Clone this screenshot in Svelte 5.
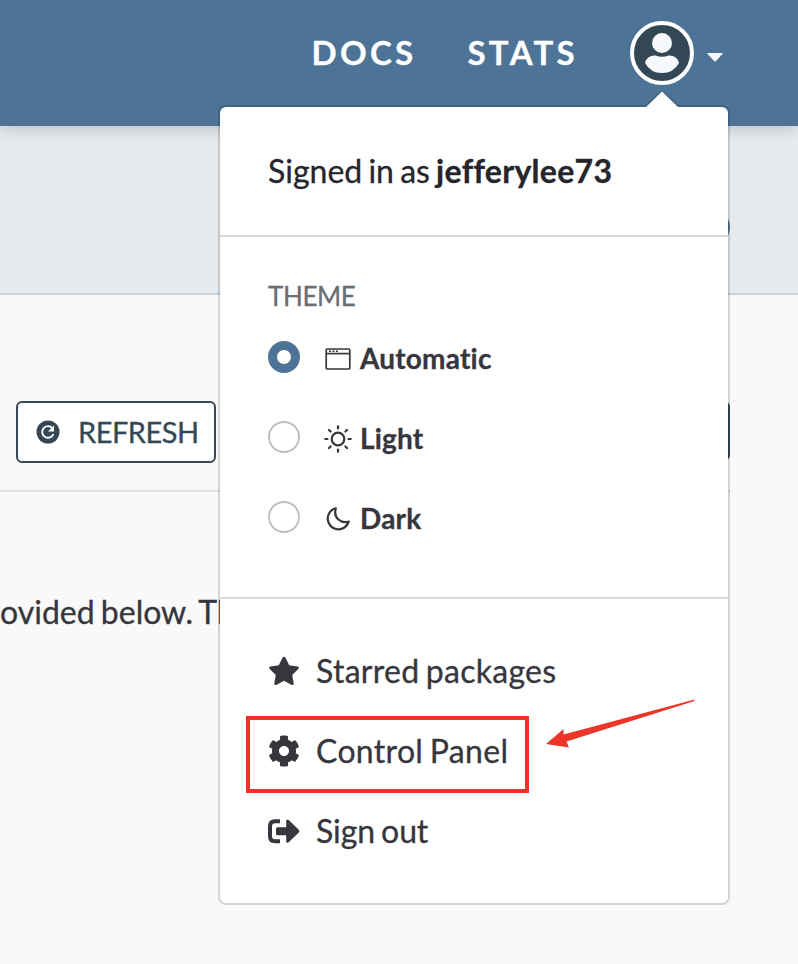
<script>
  const themes = [
    { id: 'auto', label: 'Automatic' },
    { id: 'light', label: 'Light' },
    { id: 'dark', label: 'Dark' },
  ];
  const links = [
    { id: 'star', label: 'Starred packages' },
    { id: 'gear', label: 'Control Panel' },
    { id: 'exit', label: 'Sign out' },
  ];
  const rays = [0, 45, 90, 135, 180, 225, 270, 315];
  let theme = $state('auto');
</script>

<div class="page">
  <header>
    <nav>
      <a href="#docs" class="docs">DOCS</a>
      <a href="#stats" class="stats">STATS</a>
    </nav>
    <button class="account" aria-label="Account">
      <svg class="avatar" width="64" height="64" viewBox="0 0 64 64">
        <circle cx="32" cy="32" r="30" fill="#334854" stroke="#fff" stroke-width="4" />
        <circle cx="32" cy="22" r="10" fill="#f8f9fc" />
        <path d="M25.500 34.500Q32 37 38.500 34.500Q47 34 49 42Q43.500 52 32 52T15 42Q17 34 25.500 34.500Z" fill="#f8f9fc" />
      </svg>
      <svg width="16" height="9" viewBox="0 0 16 9"><path d="M1 0H15Q16 0 15.500 1L8.700 8.300Q8 9 7.300 8.300L.5 1Q0 0 1 0Z" fill="#f8f9fc" /></svg>
    </button>
  </header>

  <section class="hero"><i class="pill"></i></section>

  <main>
    <div class="toolbar">
      <button class="refresh">
        <svg width="24" height="24" viewBox="0 0 24 24">
          <circle cx="12" cy="12" r="11.500" fill="#334854" />
          <path d="M16.300 8.100A5.800 5.800 0 1 0 17.400 14" fill="none" stroke="#fff" stroke-width="1.900" />
          <path d="M18 5.500V11.500H12Z" fill="#fff" />
        </svg>
        <span>REFRESH</span>
      </button>
      <i class="other"></i>
    </div>
    <p>ovided below. Th</p>
  </main>

  <aside class="menu">
    <svg class="tip" width="36" height="17" viewBox="0 0 36 17">
      <path d="M0 16L18 0L36 16" fill="#426380" />
      <path d="M2 17L18 1.500L34 17Z" fill="#fff" />
    </svg>
    <div class="signed">Signed in as <b>jefferylee73</b></div>
    <div class="themes">
      <h2>THEME</h2>
      {#each themes as t}
        <label>
          <input type="radio" name="theme" value={t.id} bind:group={theme} />
          <svg width="28" height="28" viewBox="0 0 28 28" fill="none" stroke="#36363c" stroke-width="2.200">
            {#if t.id === 'auto'}
              <rect x="2.200" y="4" width="23.600" height="20" rx="1" stroke-width="1.700" />
              <path d="M2 8.600H26" stroke-width="1.700" />
              <path d="M5 6.300H7M8.500 6.300H10.500M12 6.300H14" stroke-width="1.500" />
            {:else if t.id === 'light'}
              <circle cx="14" cy="14" r="6.300" />
              {#each rays as r}
                <path d="M14 1.300V3.500" stroke-linecap="round" transform="rotate({r} 14 14)" />
              {/each}
            {:else}
              <path d="M11.800 3.300A10.700 10.700 0 1 0 24.700 16.600C17.500 19 8.800 13 11.800 3.300Z" stroke-linejoin="round" />
            {/if}
          </svg>
          <span>{t.label}</span>
        </label>
      {/each}
    </div>
    <div class="links">
      {#each links as l}
        <a href="#{l.id}" class={l.id}>
          {#if l.id === 'star'}
            <svg width="32" height="32" viewBox="0 0 32 32"><path d="M14.500 2.800Q16 .5 17.500 2.800L21.200 10.300L29.500 11.500Q31.800 12.100 30.300 14L24.200 20L25.700 28.500Q25.800 30.600 23.800 29.900L16 25.800L8.200 29.900Q6.200 30.600 6.300 28.500L7.800 20L1.700 14Q.2 12.100 2.500 11.500L10.800 10.300Z" /></svg>
          {:else if l.id === 'gear'}
            <svg width="32" height="32" viewBox="0 0 512 512"><path d="M487.400 315.700l-42.600-24.600c4.300-23.200 4.300-47 0-70.200l42.600-24.600c4.900-2.800 7.100-8.600 5.500-14-11.100-35.600-30-67.800-54.700-94.600-3.800-4.100-10-5.100-14.800-2.300L380.800 110c-17.900-15.400-38.500-27.300-60.800-35.100V25.800c0-5.600-3.900-10.500-9.400-11.700-36.700-8.200-74.300-7.800-109.200 0-5.500 1.200-9.400 6.100-9.400 11.700V75c-22.200 7.900-42.800 19.800-60.800 35.100L88.700 85.500c-4.900-2.800-11-1.900-14.800 2.300-24.700 26.700-43.600 58.900-54.700 94.600-1.700 5.400.6 11.200 5.500 14L67.300 221c-4.300 23.200-4.300 47 0 70.200l-42.600 24.600c-4.900 2.800-7.100 8.600-5.500 14 11.100 35.600 30 67.800 54.700 94.600 3.800 4.100 10 5.100 14.800 2.300l42.600-24.600c17.900 15.400 38.500 27.300 60.800 35.100v49.200c0 5.600 3.900 10.500 9.400 11.700 36.700 8.200 74.300 7.800 109.200 0 5.500-1.200 9.400-6.100 9.400-11.700v-49.200c22.200-7.900 42.800-19.800 60.800-35.100l42.600 24.600c4.900 2.800 11 1.900 14.800-2.300 24.700-26.700 43.600-58.900 54.700-94.600 1.500-5.500-.7-11.300-5.600-14.100zM256 336c-44.100 0-80-35.900-80-80s35.900-80 80-80 80 35.900 80 80-35.900 80-80 80z" /></svg>
          {:else}
            <svg width="32" height="32" viewBox="0 0 32 32">
              <path d="M12 6.300H7Q2 6.300 2 11.300V21.300Q2 26.300 7 26.300H12" fill="none" stroke="#36363c" stroke-width="4" />
              <path d="M9.500 12.300H18.200V6Q18.500 3.500 20.700 5L30.800 14.800Q32 16.200 30.800 17.600L20.700 27.300Q18.500 28.700 18.200 26.200V20.300H9.500Q8 20.300 8 18.800V13.800Q8 12.300 9.500 12.300Z" />
            </svg>
          {/if}
          <span>{l.label}</span>
        </a>
      {/each}
    </div>
  </aside>

  <div class="mark"></div>
  <svg class="arrow" width="152" height="52" viewBox="0 0 152 52"><path d="M1 46L18.500 31V36.500L149.500 1.500V3L21.500 43.500L24 49.500Z" fill="#eb3528" /></svg>
</div>

<style>
  .page {
    position: relative;
    box-sizing: border-box;
    width: 798px;
    height: 964px;
    overflow: hidden;
    background: #f9f9f9;
    font-family: Lato, sans-serif;
    color: #36363c;
    -webkit-text-stroke: .3px currentColor;
  }
  a { color: inherit; text-decoration: none; }
  button { font: inherit; padding: 0; border: 0; background: none; }
  svg { display: block; flex: none; }
  header {
    position: relative;
    display: flex;
    justify-content: flex-end;
    box-sizing: border-box;
    height: 126px;
    padding-right: 75px;
    background: #4d7496;
    box-shadow: 0 2px 16px rgba(0, 0, 0, .2);
  }
  nav {
    display: flex;
    gap: 51px;
    padding-top: 32px;
    margin-right: 52px;
    color: #fff;
    font-size: 33px;
    line-height: 40px;
    font-weight: 700;
    letter-spacing: 3.300px;
  }
  .account {
    display: flex;
    align-items: center;
    gap: 13px;
    height: 64px;
    margin-top: 21px;
  }
  .account svg:last-child { margin-top: 8px; }
  .hero {
    display: flex;
    justify-content: flex-end;
    box-sizing: border-box;
    height: 169px;
    padding: 82px 68px 0 0;
    background: #e7ebee;
    border-bottom: 2px solid #c5d3df;
  }
  .pill { width: 38px; height: 38px; border-radius: 50%; background: #4d7496; }
  .toolbar {
    display: flex;
    justify-content: space-between;
    box-sizing: border-box;
    width: 730px;
    height: 197px;
    padding: 106px 0 0 16px;
    border-bottom: 2px solid #dfe2e6;
  }
  .refresh {
    display: flex;
    align-items: center;
    box-sizing: border-box;
    width: 200px;
    height: 62px;
    padding-left: 18px;
    gap: 18px;
    border: 2px solid #334854;
    border-radius: 6px;
    background: #fff;
    color: #334854;
    font-size: 29px;
    line-height: 40px;
    letter-spacing: -.5px;
  }
  .other { width: 100px; height: 60px; border-radius: 6px; background: #334854; }
  p { margin: 96px 0 0; font-size: 32px; line-height: 48px; white-space: nowrap; word-spacing: -2px; }
  .menu {
    position: absolute;
    left: 218px;
    top: 105px;
    box-sizing: border-box;
    width: 512px;
    height: 800px;
    border: 2px solid rgba(0, 0, 0, .15);
    border-radius: 8px;
    background: #fff;
    background-clip: padding-box;
  }
  .tip { position: absolute; left: 424px; top: -17px; }
  .signed {
    box-sizing: border-box;
    height: 130px;
    padding: 40px 48px 0;
    border-bottom: 2px solid #d9d9d9;
    color: #25252b;
    font-size: 32px;
    line-height: 48px;
    white-space: nowrap;
    word-spacing: -2px;
  }
  .signed b { letter-spacing: .3px; }
  .themes {
    box-sizing: border-box;
    height: 362px;
    padding: 39px 48px 0;
    border-bottom: 2px solid #d9d9d9;
  }
  h2 { margin: 0 0 20px; color: #696e73; font-size: 26px; line-height: 40px; font-weight: 400; letter-spacing: -.4px; }
  label { display: flex; align-items: flex-start; height: 80px; }
  label svg { margin: 9px 8px 0 24px; }
  label span { padding-top: 2px; font-size: 28px; line-height: 40px; font-weight: 700; letter-spacing: .2px; }
  input {
    appearance: none;
    flex: none;
    box-sizing: border-box;
    width: 32px;
    height: 32px;
    margin: 5px 0 0;
    border: 2px solid #bfbfbf;
    border-radius: 50%;
    background: #fff;
  }
  input:checked { border: 9px solid #4d7496; }
  .links { display: flex; flex-direction: column; padding: 32px 48px 0; }
  .links a { display: flex; align-items: center; gap: 16px; height: 80px; font-size: 32px; line-height: 48px; fill: #36363c; word-spacing: -2px; }
  .links .star { letter-spacing: .27px; }
  .links .gear { letter-spacing: .32px; }
  .links .exit { letter-spacing: -.1px; }
  .mark {
    position: absolute;
    left: 246px;
    top: 716px;
    box-sizing: border-box;
    width: 283px;
    height: 77px;
    border: 4px solid #eb3528;
  }
  .arrow { position: absolute; left: 545px; top: 698px; }
</style>
